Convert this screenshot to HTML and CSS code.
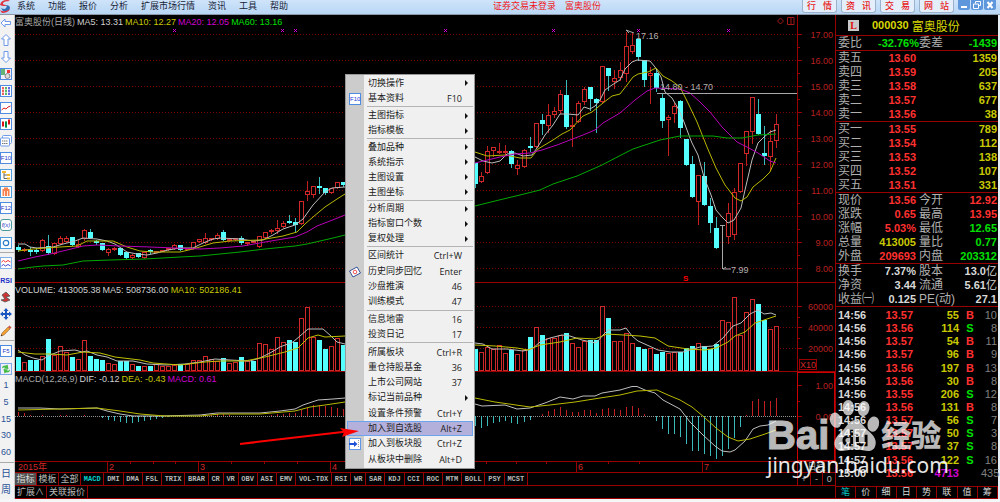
FILE: index.html
```html
<!DOCTYPE html>
<html lang="zh-CN">
<head>
<meta charset="utf-8">
<title>富奥股份 000030</title>
<link rel="stylesheet" href="styles.css">
</head>
<body>
<div class="app">
  <header class="menubar">
    <svg class="brand" viewBox="0 0 11 14"><path d="M0 5Q1 0 7 0Q9 0 10 1Q4 1 3 3Q2 5 8 5Q4 7 0 5Z" fill="#e0323c"/><path d="M1 8Q5 10 6 8Q8 6 5 5Q10 5 10 8Q9 12 3 11Z" fill="#2f6fb8"/><path d="M0 10Q4 13 10 9Q8 13 2 13Z" fill="#e0323c"/></svg>
    <nav class="menus">
      <button>系统</button><button>功能</button><button>报价</button><button>分析</button><button>扩展市场行情</button><button>资讯</button><button>工具</button><button>帮助</button>
    </nav>
    <div class="caption"><span>证券交易未登录</span><span>富奥股份</span></div>
    <div class="quick">
      <button><span>行</span><span>情</span></button><button><span>资</span><span>讯</span></button><button><span>交</span><span>易</span></button><button><span>网</span><span>站</span></button>
    </div>
    <div class="winbtns">
      <button aria-label="最小化"><svg viewBox="0 0 12 10"><path d="M3 7H9" stroke="#fff" stroke-width="2"/></svg></button>
      <button aria-label="还原"><svg viewBox="0 0 12 10"><path d="M4.500 3.500V1.500H9.500V5.500H8M2.500 4H7.500V8.500H2.500Z" stroke="#fff" fill="none"/></svg></button>
      <button aria-label="关闭"><svg viewBox="0 0 12 10"><path d="M3.500 2L8.500 8M8.500 2L3.500 8" stroke="#fff" stroke-width="2"/></svg></button>
    </div>
  </header>

  <div class="workspace">
    <aside class="toolbar">
      <button aria-label="后退"><svg viewBox="0 0 12 12"><path d="M1 6L5 2V4.500H10.500V7.500H5V10Z" fill="#fff" stroke="#6f98e8"/></svg></button>
      <button aria-label="上"><svg viewBox="0 0 12 12"><path d="M6 .5L10.500 5H8V11.500H4V5H1.500Z" fill="#fff" stroke="#6f98e8"/></svg></button>
      <button aria-label="下"><svg viewBox="0 0 12 12"><path d="M6 11.500L10.500 7H8V.5H4V7H1.500Z" fill="#fff" stroke="#6f98e8"/></svg></button>
      <button aria-label="选股"><svg viewBox="0 0 12 12"><rect x=".5" y=".5" width="11" height="11" fill="#eef" stroke="#4f8be0"/><path d="M2 1V7M4 1V7" stroke="#3aa04a" stroke-width="1.500"/><path d="M7 2H10V5H7Z" fill="#e33"/><circle cx="7.500" cy="8" r="2.500" fill="#ddd" stroke="#666" stroke-width=".7"/></svg></button>
      <button aria-label="行情表"><svg viewBox="0 0 12 12"><rect x=".5" y=".5" width="11" height="11" fill="#fff" stroke="#4f8be0"/><path d="M3 2V10" stroke="#f06060" stroke-width="2"/><path d="M6 2V10" stroke="#5ab868" stroke-width="2"/><path d="M9 2V10" stroke="#6868e0" stroke-width="2"/><path d="M1 4.500H11M1 7.500H11" stroke="#fff" stroke-width=".6"/></svg></button>
      <button aria-label="分时"><svg viewBox="0 0 12 12"><rect x=".5" y=".5" width="11" height="11" fill="#fff" stroke="#4f8be0"/><path d="M1.500 8L4 6L6 7L8 5L10.500 4" fill="none" stroke="#e02020"/></svg></button>
      <button aria-label="K线"><svg viewBox="0 0 12 12"><rect x=".5" y=".5" width="11" height="11" fill="#fff" stroke="#4f8be0"/><path d="M3 3V9M9 1V7" stroke="#d11"/><path d="M2 4H4V8H2ZM8 2H10V6H8Z" fill="#d11"/><path d="M6 3V10M5.500 4H6.500V9H5.500Z" fill="#084" stroke="#084"/></svg></button>
      <button aria-label="窗口"><svg viewBox="0 0 12 12"><rect x="2.500" y=".5" width="9" height="8" rx="1" fill="#fff" stroke="#6f9be8"/><rect x=".5" y="3" width="9" height="8" rx="1" fill="#fff" stroke="#6f9be8"/><path d="M2 6H8M2 8.500H8" stroke="#777" stroke-dasharray="1.500 .5"/></svg></button>
      <button class="boxed">F10</button>
      <button aria-label="树"><svg viewBox="0 0 12 12"><rect x=".5" y=".5" width="11" height="11" fill="#fff" stroke="#4f9be0"/><path d="M4 4V9.500H8M4 6H8" fill="none" stroke="#666"/><path d="M2 2H6V4H2ZM7 5H10V7H7ZM7 8.500H10V10.500H7Z" fill="#f3b82c"/></svg></button>
      <button aria-label="主页"><svg viewBox="0 0 12 12"><rect x=".5" y=".5" width="11" height="11" fill="#fff" stroke="#4f9be0"/><path d="M2.500 3H9.500V10H2.500ZM4 1.500H8V4H4Z" fill="#f5814f"/><path d="M4.500 10V5M7.500 10V5" stroke="#fff" stroke-width=".8"/></svg></button>
      <button class="boxed">F12</button>
      <button class="boxed round">f(x)</button>
      <button aria-label="周期"><svg viewBox="0 0 12 12"><rect x=".5" y=".5" width="11" height="11" fill="#fff" stroke="#4f9be0"/><circle cx="6" cy="6" r="2.700" fill="none" stroke="#2a78c8" stroke-width="1.200"/></svg></button>
      <hr>
      <button aria-label="叠加"><svg viewBox="0 0 12 12"><rect x=".5" y=".5" width="11" height="11" fill="#fff" stroke="#7fb0ea"/><path d="M1.500 5L3.500 3.500L5.500 5L8 3.500L10.500 5" fill="none" stroke="#e33"/><path d="M1.500 9L3.500 7.500L5.500 9L8 7.500L10.500 9" fill="none" stroke="#44c"/></svg></button>
      <button class="rsi">RSI</button>
      <button aria-label="交易"><svg viewBox="0 0 12 12"><path d="M2 4L6 1L10 5L6 6L10 9L5 11L1 9L5 8Z" fill="#c33" stroke="#555" stroke-width=".8"/></svg></button>
      <button aria-label="移动"><svg viewBox="0 0 12 12"><path d="M6 0L8.500 3H7V5H9V3.500L12 6L9 8.500V7H7V9H8.500L6 12L3.500 9H5V7H3V8.500L0 6L3 3.500V5H5V3H3.500Z" fill="#1b55c0"/></svg></button>
      <button aria-label="画笔"><svg viewBox="0 0 12 12"><path d="M1 11L2 8L8 2L10 4L4 10Z" fill="#f0a030" stroke="#964" stroke-width=".6"/><path d="M8 2L9.500 .5L11.500 2.500L10 4Z" fill="#c54"/><path d="M1 11L1.500 9.500L2.500 10.500Z" fill="#222"/></svg></button>
      <hr>
      <button class="boxed">F5</button>
      <button aria-label="刷新"><svg viewBox="0 0 12 12"><rect x=".5" y=".5" width="11" height="11" fill="#eef" stroke="#7fa8ea"/><path d="M2 5.500Q2 2 6 2.500L7.500 1.500L8.500 6L4 5.500L5 4.500Q3 4 2 5.500ZM10 6.500Q10 10 6 9.500L4.500 10.500L3.500 6L8 6.500L7 7.500Q9 8 10 6.500Z" fill="#4b4"/></svg></button>
      <button>1</button><button>5</button><button>15</button><button>30</button><button>60</button>
      <hr>
      <button class="big">日</button><button class="big">周</button>
    </aside>

    <main class="charts">
      <section class="pane price">
        <div class="plot">
          <div class="legend"><span class="dim">富奥股份(日线)</span><span>MA5: 13.31</span><span class="y">MA10: 12.27</span><span class="m">MA20: 12.05</span><span class="g">MA60: 13.16</span>
            <svg class="tools" viewBox="0 0 18 10"><path d="M3.500 2L6.500 5L3.500 8L.5 5ZM10.500 1.500H17V8.500H10.500ZM14 1.500V8.500" fill="none" stroke="#a01818"/></svg></div>
          <svg id="price" viewBox="15 29 782 253" preserveAspectRatio="xMaxYMid meet"></svg>
        </div>
        <div class="axis"><svg id="priceAxis" viewBox="798 15 37 267"></svg></div>
      </section>
      <section class="pane volume">
        <div class="plot">
          <div class="legend"><span>VOLUME: 413005.38</span><span>MA5: 508736.00</span><span class="y">MA10: 502186.41</span></div>
          <svg id="volume" viewBox="15 297 782 74" preserveAspectRatio="xMaxYMid meet"></svg>
        </div>
        <div class="axis"><svg id="volumeAxis" viewBox="798 283 37 88"></svg></div>
      </section>
      <section class="pane macd">
        <div class="plot">
          <div class="legend"><span class="dim">MACD(12,26,9)</span><span>DIF: -0.12</span><span class="y">DEA: -0.43</span><span class="m">MACD: 0.61</span></div>
          <svg id="macd" viewBox="15 386 782 75" preserveAspectRatio="xMaxYMid meet"></svg>
        </div>
        <div class="axis active"><svg id="macdAxis" viewBox="798 373 36 87"></svg></div>
      </section>
      <div class="dates"><svg id="dates" viewBox="15 462 782 10" preserveAspectRatio="xMaxYMid meet"></svg><span>日线</span></div>
      <div class="tabrow">
        <button class="cn on">指标</button><button class="cn">模板</button><button class="cn">全部</button>
        <div class="indicators">
          <button class="sel">MACD</button><button>DMI</button><button>DMA</button><button>FSL</button><button>TRIX</button><button>BRAR</button><button>CR</button><button>VR</button><button>OBV</button><button>ASI</button><button>EMV</button><button>VOL-TDX</button><button>RSI</button><button>WR</button><button>SAR</button><button>KDJ</button><button>CCI</button><button>ROC</button><button>MTM</button><button>BOLL</button><button>PSY</button><button>MCST</button>
        </div>
        <div class="zoomers"><button>+</button><button>-</button><button>0</button></div>
      </div>
      <div class="tabrow"><button class="cn wide">扩展∧</button><button class="cn wide">关联报价</button></div>
    </main>

    <aside class="quote">
      <h1><b>L</b><span>000030</span>富奥股份</h1>
      <table>
        <tbody>
          <tr><th>委比</th><td class="g">-32.76%</td><th>委差</th><td class="g">-1439</td></tr>
        </tbody>
        <tbody>
          <tr><th>卖五</th><td class="r">13.60</td><td></td><td class="y">1359</td></tr>
          <tr><th>卖四</th><td class="r">13.59</td><td></td><td class="y">205</td></tr>
          <tr><th>卖三</th><td class="r">13.58</td><td></td><td class="y">637</td></tr>
          <tr><th>卖二</th><td class="r">13.57</td><td></td><td class="y">677</td></tr>
          <tr><th>卖一</th><td class="r">13.56</td><td></td><td class="y">38</td></tr>
        </tbody>
        <tbody>
          <tr><th>买一</th><td class="r">13.55</td><td></td><td class="y">789</td></tr>
          <tr><th>买二</th><td class="r">13.54</td><td></td><td class="y">112</td></tr>
          <tr><th>买三</th><td class="r">13.53</td><td></td><td class="y">138</td></tr>
          <tr><th>买四</th><td class="r">13.52</td><td></td><td class="y">107</td></tr>
          <tr><th>买五</th><td class="r">13.51</td><td></td><td class="y">331</td></tr>
        </tbody>
        <tbody>
          <tr><th>现价</th><td class="r">13.56</td><th>今开</th><td class="r">12.92</td></tr>
          <tr><th>涨跌</th><td class="r">0.65</td><th>最高</th><td class="r">13.95</td></tr>
          <tr><th>涨幅</th><td class="r">5.03%</td><th>最低</th><td class="g">12.65</td></tr>
          <tr><th>总量</th><td class="y">413005</td><th>量比</th><td class="g">0.77</td></tr>
          <tr><th>外盘</th><td class="r">209693</td><th>内盘</th><td class="g">203312</td></tr>
        </tbody>
        <tbody>
          <tr><th>换手</th><td>7.37%</td><th>股本</th><td>13.0<i>亿</i></td></tr>
          <tr><th>净资</th><td>3.44</td><th>流通</th><td>5.61<i>亿</i></td></tr>
          <tr><th>收益㈠</th><td>0.125</td><th>PE(动)</th><td>27.1</td></tr>
        </tbody>
      </table>
      <table class="ticks">
        <tbody>
          <tr><td>14:56</td><td class="r">13.57</td><td class="y">55</td><td class="r">B</td><td>10</td></tr>
          <tr><td>14:56</td><td class="r">13.56</td><td class="y">114</td><td class="g">S</td><td>8</td></tr>
          <tr><td>14:56</td><td class="r">13.57</td><td class="y">54</td><td class="r">B</td><td>11</td></tr>
          <tr><td>14:56</td><td class="r">13.57</td><td class="y">96</td><td class="r">B</td><td>9</td></tr>
          <tr><td>14:56</td><td class="r">13.56</td><td class="y">197</td><td class="r">B</td><td>13</td></tr>
          <tr><td>14:56</td><td class="r">13.56</td><td class="y">30</td><td class="r">B</td><td>8</td></tr>
          <tr><td>14:56</td><td class="r">13.55</td><td class="y">206</td><td class="g">S</td><td>12</td></tr>
          <tr><td>14:56</td><td class="r">13.56</td><td class="y">131</td><td class="r">B</td><td>8</td></tr>
          <tr><td>14:56</td><td class="r">13.57</td><td class="y">56</td><td class="g">S</td><td>7</td></tr>
          <tr><td>14:57</td><td class="r">13.57</td><td class="y">50</td><td class="g">S</td><td>3</td></tr>
          <tr><td>14:57</td><td class="r">13.57</td><td class="y">37</td><td class="g">S</td><td>8</td></tr>
          <tr><td>14:57</td><td class="r">13.56</td><td class="y">122</td><td class="g">S</td><td>16</td></tr>
          <tr><td>15:00</td><td class="r">13.56</td><td class="m">4713</td><td></td><td>435</td></tr>
        </tbody>
      </table>
      <div class="qtabs"><button class="sel">笔</button><button>价</button><button>细</button><button>日</button><button>势</button><button>联</button><button>值</button><button>筹</button></div>
    </aside>
  </div>

  <div class="context" role="menu">
    <button class="sub">切换操作</button>
    <button><em class="f10">F10</em>基本资料<kbd>F10</kbd></button>
    <hr>
    <button class="sub">主图指标</button>
    <button class="sub">指标模板</button>
    <hr>
    <button class="sub">叠加品种</button>
    <button class="sub">系统指示</button>
    <button class="sub">主图设置</button>
    <button class="sub">主图坐标</button>
    <hr>
    <button class="sub">分析周期</button>
    <button class="sub">指标窗口个数</button>
    <button class="sub">复权处理</button>
    <hr>
    <button>区间统计<kbd>Ctrl+W</kbd></button>
    <button><svg viewBox="0 0 12 12"><path d="M.5 5L8 1L11.500 7L4 11Z" fill="#fff" stroke="#33549a"/><circle cx="6" cy="6" r="1.800" fill="none" stroke="#e55"/></svg>历史同步回忆<kbd>Enter</kbd></button>
    <button>沙盘推演<kbd>46</kbd></button>
    <button>训练模式<kbd>47</kbd></button>
    <hr>
    <button>信息地雷<kbd>16</kbd></button>
    <button>投资日记<kbd>17</kbd></button>
    <hr>
    <button>所属板块<kbd>Ctrl+R</kbd></button>
    <button>重仓持股基金<kbd>36</kbd></button>
    <button>上市公司网站<kbd>37</kbd></button>
    <button class="sub">标记当前品种</button>
    <button>设置条件预警<kbd>Ctrl+Y</kbd></button>
    <button class="hot">加入到自选股<kbd>Alt+Z</kbd></button>
    <button><svg viewBox="0 0 12 12"><rect x=".5" y=".5" width="11" height="11" fill="#fff" stroke="#5f98e8"/><path d="M0 6H6" stroke="#1c50d8" stroke-width="2"/><path d="M5 3L8.500 6L5 9Z" fill="#1c50d8"/><path d="M9.500 2V10" stroke="#999" stroke-dasharray="1 1"/></svg>加入到板块股<kbd>Ctrl+Z</kbd></button>
    <button>从板块中删除<kbd>Alt+D</kbd></button>
  </div>

  <svg class="pointer" viewBox="0 0 122 20"><path d="M1 16L112 3" stroke="#f00" stroke-width="2"/><path d="M101 0L120 3L103 9L105 4.500Z" fill="#f00"/></svg>

  <div class="watermark">
    <div class="logo"><span class="bai">Bai</span>
      <svg viewBox="0 0 54 56"><g fill="#fff"><ellipse cx="20" cy="9" rx="6" ry="8"/><ellipse cx="36" cy="10" rx="6" ry="8" transform="rotate(12 36 10)"/><ellipse cx="7" cy="22" rx="6" ry="8" transform="rotate(-15 7 22)"/><ellipse cx="46" cy="26" rx="6" ry="8" transform="rotate(15 46 26)"/><path fill-rule="evenodd" d="M27 22C33 22 36 29 42 34C49 40 50 46 47 51C44 55 38 54 33 53C29 52 25 52 21 53C15 54 10 55 7 51C4 46 6 40 12 35C18 30 20 22 27 22ZM22 32V37C17 37 14 39 14 43C14 47 17 49 20 49H25V32ZM22 40V46C19 46 17 45 17 43C17 41 19 40 22 40ZM28 37V44C28 47 30 49 33 49H40V37H37V46H33C32 46 31 45 31 44V37Z"/></g></svg>
      <span class="jy">经验</span></div>
    <div class="url">jingyan.baidu.com</div>
  </div>
</div>
<script src="chart.js"></script>
</body>
</html>
```
FILE: styles.css
```css
* { box-sizing: border-box; }
body { margin: 0; background: #f4f6f8; font-family: "Liberation Sans", "Noto Sans CJK SC", sans-serif; font-size: 9px; overflow: hidden; }
button { margin: 0; padding: 0; border: 0; background: none; font: inherit; color: inherit; white-space: nowrap; line-height: 1; }
svg { display: block; }
hr { margin: 0; border: 0; }
.r { color: #ff3030; }
.g { color: #00e000; }
.y { color: #c8c800; }
.m { color: #d000d0; }

.app { position: relative; display: flex; flex-direction: column; height: 100vh; padding-bottom: 3px; }

.menubar { display: flex; align-items: flex-start; height: 15px; background: linear-gradient(#cfe4fa, #b8d6f4); border-bottom: 1px solid #8a98a8; color: #182438; flex: none; padding-right: 4px; }
.brand { width: 11px; height: 14px; }
.menus { display: flex; gap: 13px; padding: 1px 0 0 6px; }
.menus button { height: 11px; }
.caption { flex: 1; display: flex; justify-content: center; gap: 9px; padding: 1px 0 0 4px; line-height: 11px; color: #f01818; }
.quick { display: flex; gap: 4px; }
.quick button { width: 35px; height: 13px; display: flex; justify-content: space-between; align-items: center; padding: 0 4px; border: 1px solid #9cb2cc; border-top: 0; border-radius: 0 0 3px 3px; background: #e4effb; color: #e81818; font-weight: 500; }
.winbtns { display: flex; gap: 1px; margin-left: 4px; }
.winbtns button { width: 12px; height: 10px; background: #5f97dc; border-radius: 0 0 2px 2px; }

.workspace { flex: 1; display: flex; min-height: 0; background: #000; }
.toolbar { width: 15px; flex: none; display: flex; flex-direction: column; background: #f2f2f2; border-right: 1px solid #c8c8c8; color: #2a5298; overflow: hidden; }
.toolbar button { height: 17px; flex: 0 1 auto; width: 12px; text-align: center; display: flex; align-items: center; justify-content: center; min-height: 0; }
.toolbar svg { width: 12px; height: 12px; flex: none; }
.toolbar hr { height: 3px; flex: none; border-top: 1px solid #aaa; margin-top: 1px; }
.toolbar .boxed { height: 12px; margin: 2px 0 3px; border: 1px solid #4f8be0; background: #fff; color: #2438c8; font-size: 6px; }
.toolbar .round { border-radius: 3px; border-color: #4a9a9a; font-style: italic; }
.toolbar .rsi { font-size: 7px; font-weight: bold; color: #2030c8; }
.toolbar .big { font-size: 10px; }

.charts { flex: 1; min-width: 0; display: flex; flex-direction: column; color: #c8c8c8; }
.pane { display: flex; min-height: 0; border-bottom: 1px solid #900; }
.price { flex: 267; }
.volume { flex: 88; }
.macd { flex: 89; }
.plot { flex: 1; min-width: 0; display: flex; flex-direction: column; }
.plot > svg { flex: 1; min-height: 0; width: 100%; }
.legend { display: flex; gap: 2px; height: 14px; line-height: 14px; flex: none; white-space: nowrap; color: #d0d0d0; }
.legend .dim { color: #a8a8a8; }
.tools { width: 18px; height: 10px; margin: 1px 2px 0 auto; }
.axis { width: 38px; flex: none; border-left: 1px solid #900; }
.axis.active { border: 1px solid #c00; }
.axis svg { width: 100%; height: 100%; }
.dates { display: flex; height: 11px; border-bottom: 1px solid #900; flex: none; color: #a0a0a0; line-height: 10px; }
.dates svg { flex: 1; height: 10px; min-width: 0; }
.dates span { width: 38px; flex: none; text-align: center; border-left: 1px solid #900; }
.tabrow { display: flex; height: 13px; flex: none; border-bottom: 1px solid #900; color: #b8b8b8; }
.tabrow button { border-right: 1px solid #900; }
.cn { width: 22px; }
.cn.wide { width: auto; padding: 0 2px; }
.cn.on { background: #505050; color: #ddd; }
.indicators { display: flex; width: 447px; font-family: "Liberation Mono", monospace; font-size: 7px; font-weight: bold; }
.indicators button { flex: 1 1 auto; padding: 0 2px; }
.indicators .sel, .qtabs .sel { color: #00d0d0; }
.zoomers { display: flex; width: 38px; margin-left: auto; border-left: 1px solid #900; }
.zoomers button { flex: 1; }
.zoomers button:last-child { border-right: 0; }

.gridline { stroke: #7c0000; stroke-dasharray: 1 2; }
.up { fill: #000; stroke: #d02828; }
.down { fill: #54ffff; stroke: #54ffff; }
.wick-up { stroke: #c02020; }
.wick-down { stroke: #3ababa; }
.line { fill: none; stroke-width: 1; }
.scale { fill: #b82020; font-size: 9px; text-anchor: end; }
.note { fill: #b0b0b0; font-size: 9px; }
.month { fill: #d02828; font-size: 9px; }
.flag { fill: #f00; font-size: 8px; font-weight: bold; }
.rule { stroke: #900; fill: none; }
.zero { stroke: #909090; stroke-dasharray: 1 1; }

.quote { width: 165px; flex: none; border-left: 1px solid #900; border-right: 2px solid #e4ecf4; display: flex; flex-direction: column; color: #d8d8d8; }
.quote h1 { margin: 0; padding-left: 12px; height: 21px; flex: none; display: flex; align-items: center; gap: 3px; border-bottom: 1px solid #900; color: #d8d800; font-size: 12px; font-weight: normal; }
.quote h1 b { width: 11px; height: 11px; line-height: 11px; margin-right: 10px; background: #c8c8c8; color: #e01010; text-align: center; font-family: "Liberation Serif", serif; font-size: 10px; }
.quote h1 span { font-size: 11px; font-weight: bold; }
.quote table { border-collapse: collapse; table-layout: fixed; width: 100%; font-size: 11px; font-weight: bold; line-height: 14px; flex: none; }
.quote tbody { border-bottom: 1px solid #900; }
.quote th { width: 42px; padding: 0 0 0 2px; text-align: left; font-size: 12px; font-weight: normal; color: #b0b0b0; white-space: nowrap; height: 14px; }
.quote td { padding: 0 1px 0 0; text-align: right; white-space: nowrap; height: 14px; }
.quote td i { font-style: normal; font-weight: normal; }
.quote .ticks { line-height: 13px; height: 171px; margin: 2px 0 auto; }
.quote .ticks tbody { border: 0; }
.ticks td { height: 13px; }
.ticks td:first-child { width: 32px; text-align: left; padding-left: 2px; }
.ticks td:nth-child(2) { width: 46px; }
.ticks td:nth-child(3) { width: 46px; }
.ticks td:nth-child(4) { width: 21px; text-align: center; }
.ticks td:last-child { color: #808080; font-weight: normal; }
.qtabs { display: flex; height: 13px; flex: none; border: solid #900; border-width: 1px 0; }
.qtabs button { flex: 1; border-right: 1px solid #900; }

.context { position: absolute; left: 345px; top: 74px; width: 130px; height: 395px; display: flex; flex-direction: column; padding: 1px; border: 1px solid #989898; background: linear-gradient(to right, #ccc 18px, #f0f0f0 18px); color: #202020; }
.context button { flex: 31 1 0; min-height: 0; display: flex; align-items: center; padding: 0 11px 0 21px; position: relative; }
.context .sub { flex-grow: 30; padding-right: 5px; }
.context .sub::after { content: ""; margin-left: auto; border: 3px solid transparent; border-left: 3px solid #111; border-right: 0; }
.context hr { height: 2px; margin-left: 20px; border-top: 1px solid #b4b4b4; }
.context kbd { margin-left: auto; font-family: "Open Sans", sans-serif; font-size: 9px; }
.context svg, .context .f10 { position: absolute; left: 2px; top: 2px; width: 12px; height: 12px; }
.context .f10 { border: 1px solid #4f8be0; background: #fff; color: #2438d8; font-style: normal; font-size: 6px; line-height: 10px; text-align: center; }
.context .hot { background: #b4b0dc; box-shadow: inset 0 0 0 1px #6ea4ee; }

.pointer { position: absolute; left: 239px; top: 428px; width: 122px; height: 20px; }
.watermark { position: absolute; left: 767px; top: 394px; color: #fff; }
.logo { display: flex; align-items: flex-end; height: 60px; opacity: .72; }
.logo svg { width: 52px; height: 56px; }
.bai { font-size: 40px; font-weight: bold; line-height: 46px; height: 42px; -webkit-text-stroke: 1px #fff; }
.jy { font-size: 30px; font-weight: 900; line-height: 36px; height: 36px; }
.url { font-family: "Noto Sans", sans-serif; font-size: 21px; line-height: 22px; opacity: .9; }
```
FILE: chart.js
```js
const NS = 'http://www.w3.org/2000/svg';
const X = i => Math.round(18 + i * 6.018);

function add(host, tag, attrs, text) {
  const el = document.createElementNS(NS, tag);
  for (const k in attrs) el.setAttribute(k, attrs[k]);
  if (text !== undefined) el.textContent = text;
  host.appendChild(el);
  return el;
}
const rule = (h, cls, x1, y1, x2, y2) => add(h, 'line', { class: cls, x1, y1, x2, y2 });
const curve = (h, color, ...parts) => parts.forEach(p => add(h, 'polyline', { class: 'line', stroke: color, points: p }));

// index, kind, body top, body bottom, high, low
const candles = `0c247,250,245,251 1r249,251,248,251 2c250,251,247,255 3c250,251,248,253 4r240,251,239,251 5c246,253,235,254
6r243,254,243,254 7r238,244,236,244 8r238,242,236,242 9c237,245,237,245 10r244,247,240,247 11r230,239,229,240 12c232,238,229,238
13c241,243,240,244 14c243,250,243,250 15r249,253,248,255 16r248,249,247,250 17c248,255,248,255 18c252,258,252,258 19r255,258,254,258
20c253,257,253,257 21r252,258,252,258 22c250,251,249,253 23r251,252,251,252 24r250,251,250,251 25r248,250,248,250 26r245,249,244,249
27c245,250,245,250 28r248,249,248,249 29r242,249,242,249 30r239,242,239,242 31r238,243,233,243 32r238,240,238,240 33r235,239,233,239
34c232,240,230,240 35r239,241,239,241 36r238,239,238,240 37c238,243,236,244 38r242,244,242,245 39r241,242,241,242 40r236,247,236,247
41r232,238,232,238 42r230,231,229,233 43r228,231,220,233 44r223,227,221,227 45c221,222,215,223 46c222,225,218,232 47r201,224,201,224
48r191,195,181,200 49r186,195,186,197 50c186,187,177,193 51c188,193,188,194 52r188,193,188,193 53r182,188,182,188 54c182,185,182,186
76c163,184,163,187 77r176,182,172,182 78r151,173,146,173 79r147,151,147,156 80r151,152,143,153 81r151,152,145,155 82c151,164,150,167
83r165,169,160,174 84r150,167,149,167 85c146,148,137,151 86r123,147,123,147 87c120,124,114,134 88r115,126,104,132 89r111,115,107,117
90r94,111,90,113 91c95,127,80,128 92r125,126,117,146 93r103,122,101,122 94r89,102,87,104 95c87,99,87,110 96c99,103,98,132
97r66,102,66,102 98c68,76,68,90 99r78,82,70,88 100r70,78,62,80 101r46,74,32,81 102r45,52,33,53 103c39,57,39,60 104c60,80,60,86
105r73,76,67,103 106c73,88,69,91 107c98,121,94,127 108r117,120,115,155 109r106,114,103,122 110c101,128,100,137 111c139,165,139,165
112c164,197,156,197 113r175,202,175,224 114c176,205,162,205 115c206,223,198,232 116c228,248,217,248 118r213,237,203,243
119r192,235,188,239 120r163,192,163,192 121r131,154,131,165 122r97,132,97,143 123c114,134,99,134 124c153,156,126,164
125r141,157,130,170 126r124,141,114,147`;

const volumes = `0c357 1r362 2c360 3c360 4r356 5c339 6r355 7r346 8r352 9c357 10r359 11r340 12c356 13c359 14c360 15r363 16r364 17c361
18c361 19r364 20c366 21r366 22c366 23r364 24r366 25r366 26r365 27c364 28r364 29r360 30r360 31r356 32r359 33r361 34c358 35r363 36r362
37c357 38r361 39c361 40r343 41r344 42r349 43r337 44r342 45c340 46c342 47r318 48r307 49r337 50c340 51c349 52r346 53r338 54c345
76c349 77r352 78r347 79r349 80r345 81r353 82c350 83r354 84r350 85c337 86r327 87c335 88r338 89r338 90r335 91c333 92r343 93r347
94r341 95c340 96c340 97r306 98c318 99r341 100r341 101r333 102r343 103c347 104c349 105r348 106c354 107c352 108r353 109r352 110c352
111c348 112c346 113r343 114c346 115c349 116c344 117r320 118r322 119r297 120r335 121r312 122r299 123c304 124c320 125r329 126r326`;

const histogram = `0:412 1:413 2:415 4:415 7:415 8:415 11:415 14:418 15:420 16:421 17:422 18:423 19:423 20:422 21:421 22:420 23:419 24:418
25:417 30:415 31:414 32:415 33:414 34:414 35:415 42:415 43:414 44:414 45:413 46:413 47:410 48:408 49:405 50:405 51:406 52:407 53:408
54:409 76:426 77:428 78:426 79:423 80:422 81:421 82:423 83:424 84:422 85:420 87:414 88:411 89:409 90:407 91:410 92:412 93:412 94:410
95:410 96:413 97:409 98:408 99:409 100:410 101:407 102:406 103:408 104:414 106:421 107:429 108:434 109:434 110:437 111:444 112:451
113:451 114:454 115:456 116:459 117:456 118:449 119:438 120:427 121:415 122:401 123:399 124:401 125:401 126:398`;

const P = document.getElementById('price');
for (let n = 0; n < 10; n++) rule(P, 'gridline', 15, 34.5 + n * 26, 798, 34.5 + n * 26);
candles.split(/\s+/).forEach(s => {
  const [, i, k, t, b, h, l] = s.match(/^(\d+)([rc])(\d+),(\d+),(\d+),(\d+)/);
  const x = X(+i);
  rule(P, k === 'r' ? 'wick-up' : 'wick-down', x + .5, h, x + .5, +l + 1);
  add(P, 'rect', { class: k === 'r' ? 'up' : 'down', x: x - 1.5, y: +t + .5, width: 4, height: Math.max(b - t - 1, 1) });
});
curve(P, '#bdbdbd', '18,244 25,244 30,247 37,248 53,247 63,244 75,241 83,238 97,239 107,241 115,244 127,252 137,254 147,255 157,253 168,250 180,248 193,248 203,243 213,239 220,238 240,239 253,241 263,240 273,235 283,229 295,225 303,219 313,205 325,192 332,188 345,187',
  '475,157 483,161 492,163 500,161 507,154 515,153 523,156 532,155 537,148 545,135 553,125 560,114 568,114 578,115 584,107 590,109 595,106 600,100 605,90 612,85 620,80 625,69 632,62 637,60 650,61 655,67 661,77 665,92 672,98 679,110 684,122 690,138 692,143 698,155 704,177 711,195 716,210 722,217 728,223 734,220 741,208 745,190 752,160 758,143 764,137 770,132 776,130');
curve(P, '#b8b800', '18,251 33,249 60,247 77,246 87,241 113,241 127,247 140,251 153,252 180,252 193,249 213,243 230,241 260,240 283,236 297,232 305,224 313,217 325,207 337,199 345,194',
  '475,152 487,156 505,155 520,158 531,158 538,149 553,140 562,134 570,130 583,116 592,112 603,103 612,96 620,94 627,85 633,77 638,74 648,72 656,68 663,76 672,81 680,87 688,103 697,122 707,147 716,168 725,185 735,198 741,201 747,197 753,187 763,179 770,172 776,158');
curve(P, '#b800b8', '18,261 35,257 50,254 67,250 83,246 97,245 120,246 150,247 200,249 220,248 243,246 265,242 283,239 295,237 307,232 317,226 330,221 345,215',
  '475,163 500,157 515,154 530,153 542,150 557,145 583,135 595,130 603,123 620,113 635,100 647,91 655,88 680,89 690,93 700,102 710,112 722,127 737,142 747,147 758,153 770,161 776,163');
curve(P, '#00a800', '18,269 33,267 43,266 63,265 83,261 110,260 145,259 180,257 200,256 240,252 265,249 295,246 307,244 320,241 333,238 345,235',
  '475,206 495,201 520,195 540,190 553,184 577,176 602,165 625,153 633,149 660,140 680,136 713,136 727,138 742,138 758,135 776,134');
[174, 282, 295, 445, 553, 638, 728].forEach(x =>
  add(P, 'path', { d: `M${x - 1} 29l3 3m0 -3l-3 3`, stroke: '#d000d0', fill: 'none' }));
add(P, 'path', { d: 'M657 93.500H798', stroke: '#a8a8a8', 'stroke-width': 1 });
add(P, 'path', { d: 'M720 225.500H725M722.500 225V269M731 269H723L726 267', stroke: '#a8a8a8', fill: 'none' });
add(P, 'path', { d: 'M626 30L634 33M626 30L629 33', stroke: '#a8a8a8', fill: 'none' });
add(P, 'text', { class: 'note', x: 636, y: 39 }, '17.16');
add(P, 'text', { class: 'note', x: 660, y: 90 }, '14.80 - 14.70');
add(P, 'text', { class: 'note', x: 731, y: 273 }, '7.99');
add(P, 'text', { class: 'flag', x: 683, y: 281 }, 'S');

const V = document.getElementById('volume');
[306.5, 327.5, 348.5].forEach(y => rule(V, 'gridline', 15, y, 798, y));
volumes.split(/\s+/).forEach(s => {
  const [, i, k, t] = s.match(/^(\d+)([rc])(\d+)/);
  add(V, 'rect', { class: k === 'r' ? 'up' : 'down', x: X(+i) - 1.5, y: +t + .5, width: 4, height: 370 - t });
});
curve(V, '#bdbdbd', '18,350 25,355 33,358 42,360 48,356 60,351 75,350 82,352 87,351 97,355 107,357 117,361 133,361 147,364 165,365 185,364 200,362 215,359 230,360 250,361 260,358 270,353 280,347 293,342 300,336 308,329 323,329 331,336 337,342 345,344',
  '475,343 483,344 492,349 507,349 523,351 532,349 540,342 550,338 562,335 570,336 582,340 596,343 604,334 608,330 620,330 626,328 632,336 638,341 647,345 658,350 670,352 683,352 690,350 700,347 713,346 723,338 733,326 741,323 750,314 758,310 764,314 771,313 776,315');
curve(V, '#c0c000', '18,352 35,354 50,354 67,355 83,352 100,353 115,357 140,360 153,363 180,365 205,362 220,361 245,361 265,357 285,352 298,348 308,338 318,335 325,337 345,336',
  '475,345 495,346 517,348 528,350 540,345 560,342 577,338 595,339 607,334 640,336 655,338 668,346 688,349 705,350 716,348 728,342 735,336 745,332 755,323 770,318 776,316');

const M = document.getElementById('macd');
rule(M, 'zero', 15, 416.5, 798, 416.5);
histogram.split(/\s+/).forEach(s => {
  const [i, y] = s.split(':').map(Number);
  rule(M, y < 416 ? 'wick-up' : 'wick-down', X(i) + .5, 416, X(i) + .5, y);
});
curve(M, '#bdbdbd', '18,408 40,408 60,409 97,408 107,411 120,414 133,416 160,416 200,415 217,413 260,413 280,411 295,409 303,405 318,400 333,399 345,398',
  '475,404 482,406 505,405 517,409 530,408 545,403 560,397 573,399 583,396 595,396 602,393 620,390 632,386.500 637,386.500 645,390 655,393 663,400 680,409 690,422 703,435 715,446 722,451 730,452 735,450 745,441 753,429 760,426 768,425 776,421');
curve(M, '#b8b800', '18,410 60,409 97,408 120,411 140,414 165,416 200,416 220,414 260,414 295,411 310,407 325,405 345,402',
  '475,398 495,402 530,407 550,405 575,402 600,398 620,395 637,391 657,390 668,395 680,400 692,407 704,417 716,428 728,437 738,441 750,439 765,434 776,430');

const axis = (id, marks, minor) => {
  const g = document.getElementById(id);
  marks.forEach(([y, t]) => {
    rule(g, 'rule', 798, y, 802, y);
    add(g, 'text', { class: 'scale', x: 833, y: y + 3.5 }, t);
  });
  minor.forEach(y => rule(g, 'rule', 798, y, 800, y));
  return g;
};
const levels = [17, 16, 15, 14, 13, 12, 11, 10, 9, 8].map((v, n) => [34.5 + n * 26, v.toFixed(2)]);
axis('priceAxis', levels, levels.slice(0, 9).map(l => l[0] + 13));
const va = axis('volumeAxis', [[306.5, '60000'], [327.5, '40000'], [348.5, '20000']], [317.5, 338.5]);
add(va, 'rect', { class: 'rule', x: 799.5, y: 359.5, width: 17, height: 10 });
add(va, 'text', { class: 'month', x: 800, y: 368 }, 'X10');
axis('macdAxis', [[385.5, '1.00'], [416.5, '0.00']], [401.5]);

const D = document.getElementById('dates');
add(D, 'text', { class: 'month', x: 18, y: 470 }, '2015年');
[[107, 2], [198, 3], [330, 4], [576, 6], [702, 7]].forEach(([x, m]) => {
  rule(D, 'rule', x + .5, 462, x + .5, 472);
  add(D, 'text', { class: 'month', x: x + 2, y: 470 }, m);
});
[130, 153, 175, 231, 264, 297, 486, 516, 546, 608, 639].forEach(x => rule(D, 'rule', x + .5, 462, x + .5, 464));
```
